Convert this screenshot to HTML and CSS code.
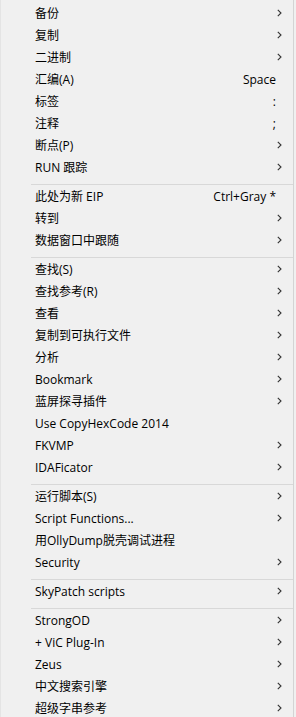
FILE: index.html
```html
<!DOCTYPE html>
<html>
  <head>
    <meta charset="utf-8" />
    <link rel="stylesheet" href="styles.css">
  </head>
  <body>
    <div class="menu">
      <div class="item"><span class="label">备份</span><span class="sub"></span></div>
      <div class="item"><span class="label">复制</span><span class="sub"></span></div>
      <div class="item"><span class="label">二进制</span><span class="sub"></span></div>
      <div class="item"><span class="label">汇编(A)</span><span class="key">Space</span></div>
      <div class="item"><span class="label">标签</span><span class="key">:</span></div>
      <div class="item"><span class="label">注释</span><span class="key">;</span></div>
      <div class="item"><span class="label">断点(P)</span><span class="sub"></span></div>
      <div class="item"><span class="label">RUN 跟踪</span><span class="sub"></span></div>
      <div class="sep"></div>
      <div class="item"><span class="label">此处为新 EIP</span><span class="key">Ctrl+Gray *</span></div>
      <div class="item"><span class="label">转到</span><span class="sub"></span></div>
      <div class="item"><span class="label">数据窗口中跟随</span><span class="sub"></span></div>
      <div class="sep"></div>
      <div class="item"><span class="label">查找(S)</span><span class="sub"></span></div>
      <div class="item"><span class="label">查找参考(R)</span><span class="sub"></span></div>
      <div class="item"><span class="label">查看</span><span class="sub"></span></div>
      <div class="item"><span class="label">复制到可执行文件</span><span class="sub"></span></div>
      <div class="item"><span class="label">分析</span><span class="sub"></span></div>
      <div class="item"><span class="label">Bookmark</span><span class="sub"></span></div>
      <div class="item"><span class="label">蓝屏探寻插件</span><span class="sub"></span></div>
      <div class="item"><span class="label">Use CopyHexCode 2014</span></div>
      <div class="item"><span class="label">FKVMP</span><span class="sub"></span></div>
      <div class="item"><span class="label">IDAFicator</span><span class="sub"></span></div>
      <div class="sep"></div>
      <div class="item"><span class="label">运行脚本(S)</span><span class="sub"></span></div>
      <div class="item"><span class="label">Script Functions...</span><span class="sub"></span></div>
      <div class="item"><span class="label">用OllyDump脱壳调试进程</span></div>
      <div class="item"><span class="label">Security</span><span class="sub"></span></div>
      <div class="sep"></div>
      <div class="item"><span class="label">SkyPatch scripts</span><span class="sub"></span></div>
      <div class="sep"></div>
      <div class="item"><span class="label">StrongOD</span><span class="sub"></span></div>
      <div class="item"><span class="label">+ ViC Plug-In</span><span class="sub"></span></div>
      <div class="item"><span class="label">Zeus</span><span class="sub"></span></div>
      <div class="item"><span class="label">中文搜索引擎</span><span class="sub"></span></div>
      <div class="item"><span class="label">超级字串参考</span><span class="sub"></span></div>
    </div>
  </body>
</html>
```

FILE: styles.css
```css
/* OllyDbg style context menu */
body {
  margin: 0;
  background-color: #f0f0f0;
}

.menu {
  width: 294px;
  height: 717px;
  box-sizing: border-box;
  padding-top: 2px;
  border-right: 1px solid #d4d4d4;
  border-left: 1px solid #e4e4e4;
  background-color: #f0f0f0;
  overflow: hidden;
  font-family: "Open Sans", "Noto Sans CJK SC", sans-serif;
  font-size: 12px;
  color: #000000;
}

.item {
  display: flex;
  align-items: center;
  height: 22px;
  padding-left: 34px;
  padding-right: 11px;
}

.label {
  flex: 1;
  white-space: nowrap;
}

.key {
  padding-right: 6px;
  white-space: nowrap;
}

.sub {
  width: 5px;
  height: 8px;
  background: url("data:image/svg+xml;utf8,<svg xmlns='http://www.w3.org/2000/svg' width='5' height='8'><path d='M0.8 0.8 L4 4 L0.8 7.2' fill='none' stroke='%23333' stroke-width='1.1'/></svg>") no-repeat;
}

.sep {
  height: 7px;
  margin-left: 30px;
  box-sizing: border-box;
  border-bottom: 1px solid #d8d8d8;
}
```
